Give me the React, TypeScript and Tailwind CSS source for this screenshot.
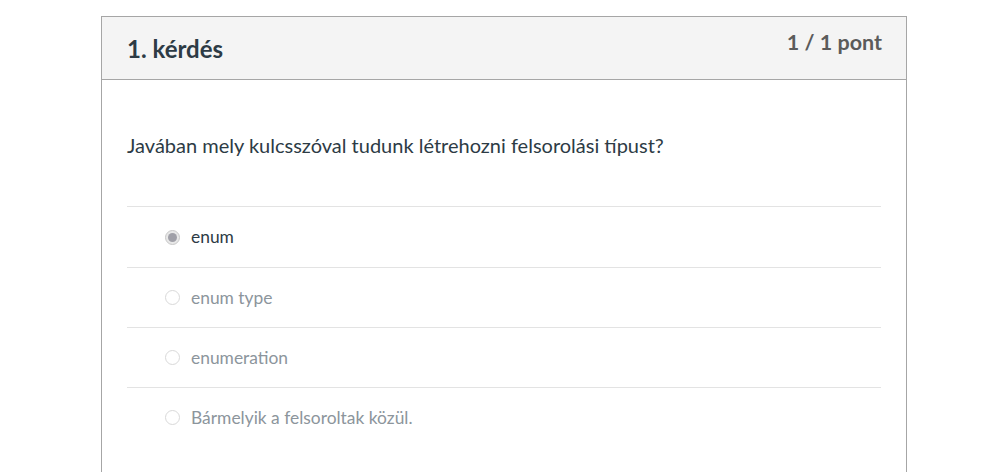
import React from "react";

const answers = [
  { text: "enum", selected: true },
  { text: "enum type", selected: false },
  { text: "enumeration", selected: false },
  { text: "Bármelyik a felsoroltak közül.", selected: false },
];

function Radio({ selected }: { selected: boolean }) {
  return selected ? (
    <span className="w-[15px] h-[15px] rounded-full border border-[#c8c8c8] bg-[#e8e8e8] flex items-center justify-center shrink-0">
      <span className="w-[9px] h-[9px] rounded-full bg-[#a0a0a8]" />
    </span>
  ) : (
    <span className="w-[15px] h-[15px] rounded-full border border-[#d9d9d9] bg-white shrink-0" />
  );
}

export default function App() {
  return (
    <div className="bg-white min-h-[472px] pt-[16px]" style={{ fontFamily: "Lato, 'Noto Sans', sans-serif" }}>
      <div className="ml-[101px] w-[806px] border border-[#a6a6a6] border-b-0 h-[456px] overflow-hidden">
        <div className="h-[63px] bg-[#f4f4f4] border-b border-[#a6a6a6] flex justify-between pl-[25px] pr-[24px]">
          <h2 className="text-[24px] font-bold text-[#2d3b45] leading-none pt-[20px]">1. kérdés</h2>
          <div className="text-[21.5px] font-bold text-[#5b5b5b] leading-none pt-[15px]">1 / 1 pont</div>
        </div>
        <div className="px-[25px]">
          <p className="text-[20px] text-[#2d3b45] leading-none pt-[55px] pb-[51px]">
            Javában mely kulcsszóval tudunk létrehozni felsorolási típust?
          </p>
          <div>
            {answers.map((a, i) => (
              <div
                key={i}
                className={`${i === 0 ? "h-[61px]" : "h-[60px]"} border-t border-[#e3e3e3] flex items-center pl-[38px] gap-[11px]`}
              >
                <Radio selected={a.selected} />
                <span className={`text-[17.4px] leading-none ${a.selected ? "text-[#2d3b45]" : "text-[#8c959c]"}`}>
                  {a.text}
                </span>
              </div>
            ))}
          </div>
        </div>
      </div>
    </div>
  );
}
